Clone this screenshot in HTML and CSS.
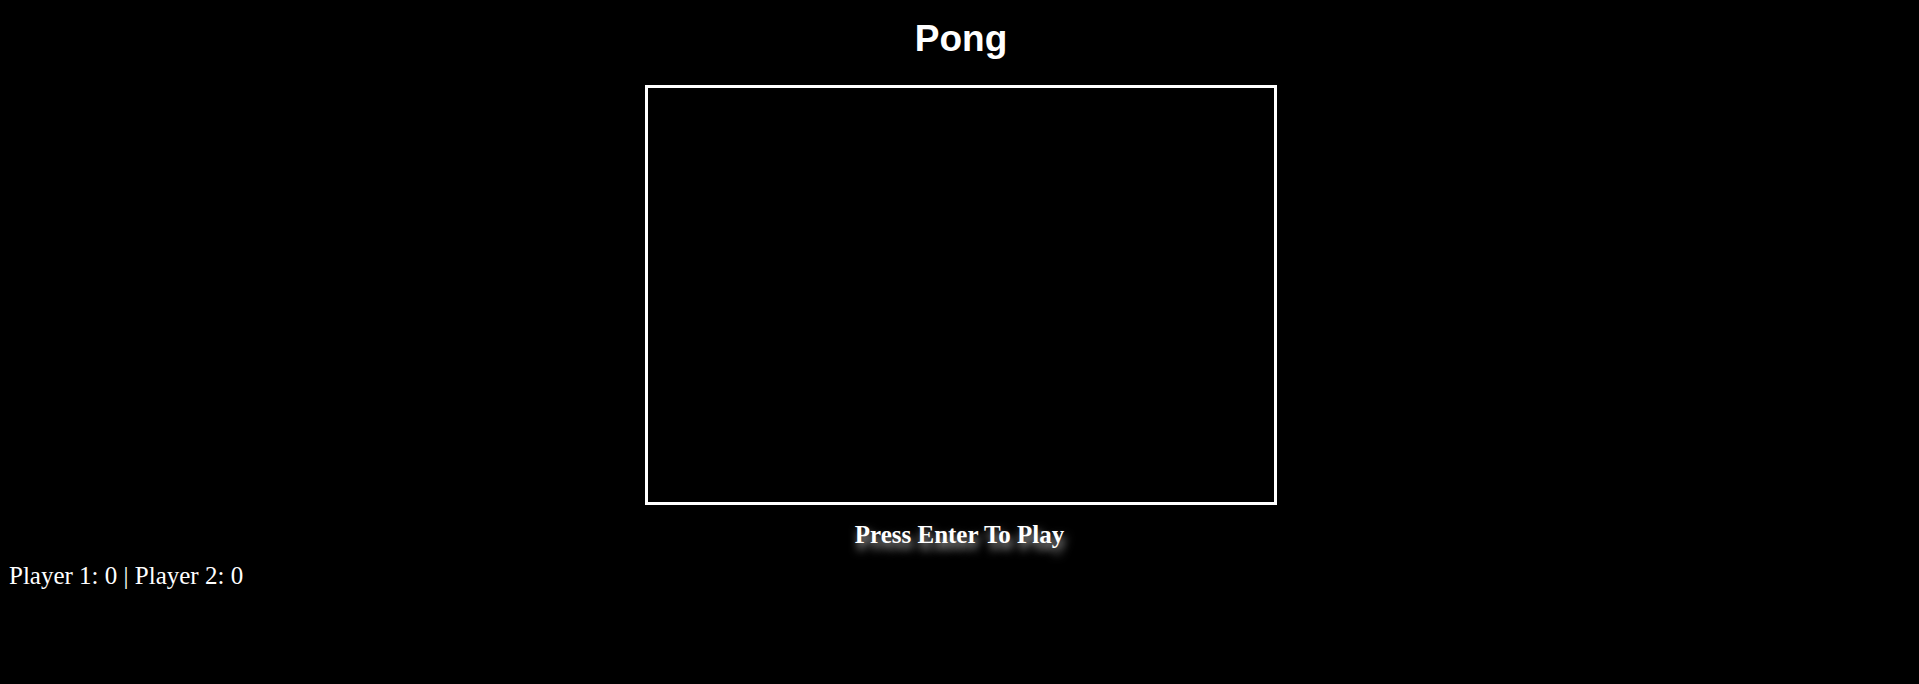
FILE: index.html
```html
<!DOCTYPE html>
<html lang="en">
<head>
<meta charset="utf-8">
<title>Pong</title>
<link rel="stylesheet" href="styles.css">
</head>
<body>
<h1 class="title">Pong</h1>
<div class="board"></div>
<p class="prompt">Press Enter To Play</p>
<div class="score">Player 1: 0 | Player 2: 0</div>
</body>
</html>
```
FILE: styles.css
```css
html, body {
  background: #000;
}
body {
  margin: 0;
  padding: 0 8px;
  color: #fff;
  font-family: "Liberation Serif", "Times New Roman", serif;
}
.title {
  font-family: "Liberation Sans", Arial, sans-serif;
  font-weight: bold;
  font-size: 37px;
  line-height: 40px;
  margin: 0;
  padding-top: 19px;
  text-align: center;
  padding-left: 3px;
}
.board {
  width: 626px;
  height: 414px;
  border: 3px solid #fff;
  margin: 26px auto 0;
  position: relative;
  left: 1.5px;
  background: #000;
}
.prompt {
  margin: 16px 0 0;
  text-align: center;
  font-weight: bold;
  font-size: 25px;
  line-height: 28px;
  text-shadow: 2px 6px 10px rgba(255, 255, 255, 0.75);
}
.score {
  margin-top: 13px;
  padding-left: 1px;
  font-size: 25px;
  line-height: 28px;
}
```
